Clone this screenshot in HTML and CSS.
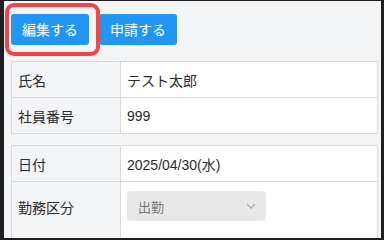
FILE: index.html
```html
<!DOCTYPE html>
<html lang="ja">
<head>
<meta charset="utf-8">
<link rel="stylesheet" href="styles.css">
</head>
<body>
<div class="frame">
  <div class="actions">
    <button class="btn">編集する</button>
    <button class="btn">申請する</button>
    <div class="highlight"></div>
  </div>
  <table class="info">
    <tr><th>氏名</th><td>テスト太郎</td></tr>
    <tr><th>社員番号</th><td>999</td></tr>
  </table>
  <table class="info second">
    <tr><th>日付</th><td>2025/04/30(水)</td></tr>
    <tr><th class="top">勤務区分</th><td class="selcell">
      <div class="select">
        <span>出勤</span>
        <svg class="chev" width="10" height="6" viewBox="0 0 10 6"><path d="M1 1 L5 5 L9 1" fill="none" stroke="#aab1bb" stroke-width="1.5"/></svg>
      </div>
    </td></tr>
  </table>
</div>
</body>
</html>
```
FILE: styles.css
```css
html, body {
  margin: 0;
  padding: 0;
  height: 100%;
  overflow: hidden;
  background: #1f1f1f;
}
.frame {
  box-sizing: border-box;
  width: 100%;
  height: 100vh;
  border-style: solid;
  border-color: #1f1f1f;
  border-width: 1px 3px 2px 4px;
  background: #f3f4f6;
  padding: 13px 0 0 7px;
  overflow: hidden;
  font-family: "Liberation Sans", "Noto Sans CJK JP", sans-serif;
  font-size: 14px;
  color: #2b2b2b;
}
.actions {
  position: relative;
  display: flex;
  gap: 10px;
  height: 31px;
}
.btn {
  width: 78px;
  height: 31px;
  border: none;
  border-radius: 3px;
  background: #2196f3;
  color: #fff;
  font-family: "Noto Sans CJK JP", sans-serif;
  font-size: 14px;
  padding: 0;
  line-height: 31px;
}
.highlight {
  position: absolute;
  left: -6px;
  top: -11px;
  width: 95px;
  height: 53px;
  box-sizing: border-box;
  border: 4px solid #f44448;
  border-radius: 9px;
}
.info {
  border-collapse: collapse;
  width: 367px;
  margin-top: 16px;
  background: #fff;
}
.info.second {
  margin-top: 11px;
}
.info th, .info td {
  border: 1px solid #d5d9e0;
  height: 36px;
  padding: 0 0 0 6px;
  text-align: left;
  font-weight: normal;
  box-sizing: border-box;
}
.info th {
  width: 109px;
  background: #f3f4f6;
}
.info th.top {
  vertical-align: top;
  padding-top: 15px;
}
.info td.selcell {
  height: 60px;
  padding-top: 9px;
  vertical-align: top;
}
.select {
  width: 139px;
  height: 30px;
  background: #e8e8e8;
  border-radius: 4px;
  display: flex;
  align-items: center;
  justify-content: space-between;
  padding: 0 10px 0 11px;
  box-sizing: border-box;
  color: #777;
  font-size: 13px;
}
```
